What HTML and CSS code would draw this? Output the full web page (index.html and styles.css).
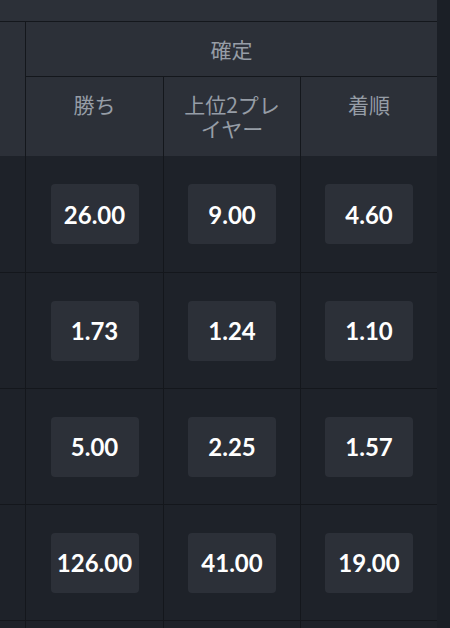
FILE: index.html
```html
<!DOCTYPE html>
<html lang="ja">
<head>
<meta charset="utf-8">
<link rel="stylesheet" href="styles.css">
</head>
<body>
<div class="board">
  <div class="topband"></div>
  <div class="head">
    <div class="head-side"></div>
    <div class="head-main">
      <div class="group">確定</div>
      <div class="subs">
        <div class="sub">勝ち</div>
        <div class="sub">上位2プレイヤー</div>
        <div class="sub">着順</div>
      </div>
    </div>
  </div>
  <div class="row first">
    <div class="side"></div>
    <div class="cell"><span class="odds">26.00</span></div>
    <div class="cell"><span class="odds">9.00</span></div>
    <div class="cell"><span class="odds">4.60</span></div>
  </div>
  <div class="row">
    <div class="side"></div>
    <div class="cell"><span class="odds">1.73</span></div>
    <div class="cell"><span class="odds">1.24</span></div>
    <div class="cell"><span class="odds">1.10</span></div>
  </div>
  <div class="row">
    <div class="side"></div>
    <div class="cell"><span class="odds">5.00</span></div>
    <div class="cell"><span class="odds">2.25</span></div>
    <div class="cell"><span class="odds">1.57</span></div>
  </div>
  <div class="row">
    <div class="side"></div>
    <div class="cell"><span class="odds">126.00</span></div>
    <div class="cell"><span class="odds">41.00</span></div>
    <div class="cell"><span class="odds">19.00</span></div>
  </div>
  <div class="row">
    <div class="side"></div>
    <div class="cell"></div>
    <div class="cell"></div>
    <div class="cell"></div>
  </div>
</div>
</body>
</html>
```
FILE: styles.css
```css
html, body {
  margin: 0;
  padding: 0;
  background: #1b1f26;
  overflow: hidden;
  height: 628px;
}
.board {
  width: 437px;
  background: #1e2229;
  font-family: "Noto Sans CJK JP", "Noto Sans", sans-serif;
}
.topband {
  height: 21px;
  background: #2c3038;
  border-bottom: 1px solid #14171c;
}
.head {
  display: flex;
  height: 134px;
  background: #2c3038;
}
.head-side {
  width: 25px;
  border-right: 1px solid #14171c;
}
.head-main {
  flex: 1;
  display: flex;
  flex-direction: column;
}
.group {
  height: 54px;
  border-bottom: 1px solid #14171c;
  display: flex;
  align-items: center;
  justify-content: center;
  color: #969da6;
  font-size: 21px;
}
.subs {
  flex: 1;
  display: flex;
}
.sub {
  width: 137px;
  box-sizing: border-box;
  padding: 15px 14px 0;
  text-align: center;
  color: #969da6;
  font-size: 21px;
  line-height: 24px;
}
.sub + .sub {
  border-left: 1px solid #14171c;
}
.row {
  display: flex;
  height: 115px;
  border-bottom: 1px solid #14171c;
}
.row.first {
  height: 116px;
}
.side {
  width: 25px;
  border-right: 1px solid #14171c;
}
.cell {
  width: 137px;
  box-sizing: border-box;
  display: flex;
  align-items: center;
  justify-content: center;
}
.cell + .cell {
  border-left: 1px solid #14171c;
}
.odds {
  width: 88px;
  height: 60px;
  border-radius: 4px;
  background: #2c3038;
  color: #ffffff;
  font-family: "Lato", sans-serif;
  font-weight: 700;
  font-size: 24px;
  display: flex;
  align-items: center;
  justify-content: center;
}
```
